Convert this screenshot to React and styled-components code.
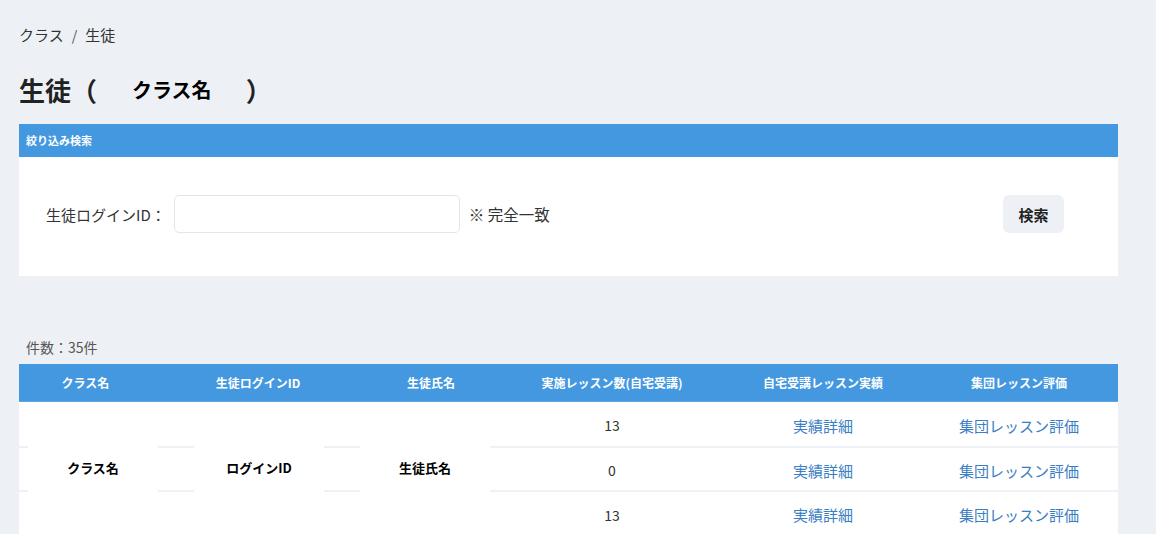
import React from 'react';
import styled, { createGlobalStyle } from 'styled-components';

const GlobalStyle = createGlobalStyle`
  html, body {
    margin: 0;
    padding: 0;
    background: #edf1f6;
  }
  body {
    font-family: "Noto Sans CJK JP", "Noto Sans", sans-serif;
    color: #333;
  }
  * {
    box-sizing: border-box;
  }
`;

const Page = styled.div`
  width: 1099px;
  margin-left: 19px;
  padding-top: 23px;
`;

const Breadcrumb = styled.nav`
  display: flex;
  align-items: center;
  gap: 8px;
  font-size: 15px;
  line-height: 24px;
  color: #333;
`;

const Separator = styled.span`
  color: #555;
  font-size: 14px;
`;

const Title = styled.h1`
  margin: 25px 0 16px;
  font-size: 26px;
  line-height: 36px;
  font-weight: 700;
  color: #222;
  display: flex;
  align-items: center;
`;

const TitleClass = styled.span`
  font-size: 20px;
  color: #000;
  padding: 0 34px 0 35px;
`;

const PanelHeader = styled.div`
  background: #4398e0;
  color: #fff;
  font-size: 11px;
  font-weight: 700;
  height: 33px;
  line-height: 33px;
  padding-left: 7px;
`;

const PanelBody = styled.div`
  background: #fff;
  padding: 38px 54px 43px 27px;
  display: flex;
  align-items: center;
`;

const Label = styled.label`
  font-size: 15px;
  color: #333;
  margin-right: 8px;
`;

const Input = styled.input`
  width: 286px;
  height: 38px;
  border: 1px solid #dfe6ee;
  border-radius: 5px;
  background: #fff;
  outline: none;
`;

const Note = styled.span`
  font-size: 15.5px;
  color: #333;
  margin-left: 9px;
`;

const SearchButton = styled.button`
  margin-left: auto;
  width: 61px;
  height: 38px;
  border: none;
  border-radius: 6px;
  background: #edf1f6;
  color: #222;
  font-family: inherit;
  font-size: 15px;
  font-weight: 700;
`;

const Count = styled.div`
  margin: 61px 0 7px 7px;
  font-size: 14px;
  line-height: 20px;
  color: #555;
`;

const HeaderRow = styled.div`
  display: grid;
  grid-template-columns: 133px 212px 134px 228px 194px 198px;
  height: 38px;
  background: #4398e0;
  border-bottom: 1px solid #5aa6e6;
`;

const HeadCell = styled.div`
  display: flex;
  align-items: center;
  justify-content: center;
  color: #fff;
  font-size: 12px;
  font-weight: 700;
`;

const Body = styled.div`
  display: grid;
  grid-template-columns: 479px 228px 194px 198px;
  grid-template-rows: 46px 44px 45px;
  background: #fff;
`;

const RowLine = styled.div`
  grid-column: 1 / -1;
  grid-row: ${({ $row }) => $row};
  border-bottom: 2px solid #eef2f7;
`;

const Cell = styled.div`
  grid-column: ${({ $col }) => $col};
  grid-row: ${({ $row }) => $row};
  display: flex;
  align-items: center;
  justify-content: center;
  font-size: ${({ $link }) => ($link ? '15px' : '14px')};
  color: ${({ $link }) => ($link ? '#3a7ec4' : '#333')};
  cursor: ${({ $link }) => ($link ? 'pointer' : 'default')};
`;

const Group = styled.div`
  grid-column: 1;
  grid-row: 1 / -1;
  display: grid;
  grid-template-columns: repeat(3, 130px);
  column-gap: 36px;
  padding-left: 9px;
`;

const GroupCell = styled.div`
  background: #fff;
  display: flex;
  align-items: center;
  justify-content: center;
  padding-bottom: 4px;
  color: #000;
  font-size: 13px;
  font-weight: 700;
`;

const headers = [
  'クラス名',
  '生徒ログインID',
  '生徒氏名',
  '実施レッスン数(自宅受講)',
  '自宅受講レッスン実績',
  '集団レッスン評価',
];

const lessons = [13, 0, 13];

export default function App() {
  return (
    <>
      <GlobalStyle />
      <Page>
        <Breadcrumb>
          <span>クラス</span>
          <Separator>/</Separator>
          <span>生徒</span>
        </Breadcrumb>

        <Title>
          生徒（<TitleClass>クラス名</TitleClass>）
        </Title>

        <PanelHeader>絞り込み検索</PanelHeader>
        <PanelBody>
          <Label>生徒ログインID：</Label>
          <Input type="text" />
          <Note>※ 完全一致</Note>
          <SearchButton>検索</SearchButton>
        </PanelBody>

        <Count>件数：35件</Count>

        <HeaderRow>
          {headers.map((h) => (
            <HeadCell key={h}>{h}</HeadCell>
          ))}
        </HeaderRow>
        <Body>
          {lessons.map((n, i) => (
            <React.Fragment key={i}>
              <RowLine $row={i + 1} />
              <Cell $col={2} $row={i + 1}>{n}</Cell>
              <Cell $col={3} $row={i + 1} $link>実績詳細</Cell>
              <Cell $col={4} $row={i + 1} $link>集団レッスン評価</Cell>
            </React.Fragment>
          ))}
          <Group>
            <GroupCell>クラス名</GroupCell>
            <GroupCell>ログインID</GroupCell>
            <GroupCell>生徒氏名</GroupCell>
          </Group>
        </Body>
      </Page>
    </>
  );
}
